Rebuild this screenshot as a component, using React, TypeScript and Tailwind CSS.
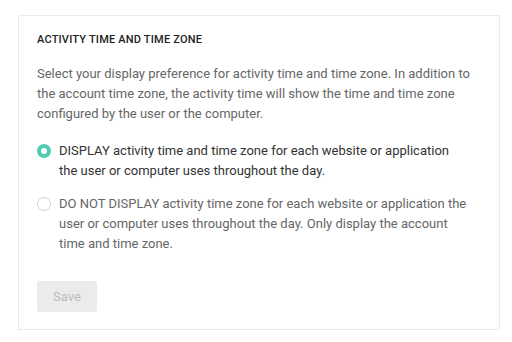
import { useState } from "react";

const options = [
  {
    id: "display",
    label:
      "DISPLAY activity time and time zone for each website or application the user or computer uses throughout the day.",
  },
  {
    id: "hide",
    label:
      "DO NOT DISPLAY activity time zone for each website or application the user or computer uses throughout the day. Only display the account time and time zone.",
  },
];

export default function App() {
  const [selected, setSelected] = useState("display");

  return (
    <div className="min-h-[342px] bg-white pl-[18px] pt-[15px] font-['Roboto',sans-serif]">
      <div className="w-[482px] border border-[#ebebeb] bg-white px-[18px] pt-[16px] pb-[17px]">
        <h2 className="text-[11px] leading-4 font-medium tracking-[0.2px] text-[#222]">
          ACTIVITY TIME AND TIME ZONE
        </h2>

        <p className="mt-4 text-[13px] leading-5 text-[#666]">
          Select your display preference for activity time and time zone. In addition to
          the account time zone, the activity time will show the time and time zone
          configured by the user or the computer.
        </p>

        <div className="mt-[17px] flex flex-col gap-[13px]">
          {options.map((opt) => {
            const active = selected === opt.id;
            return (
              <label
                key={opt.id}
                className="flex cursor-pointer items-start gap-[8px]"
                onClick={() => setSelected(opt.id)}
              >
                <span
                  className={
                    active
                      ? "mt-[3px] flex h-[14px] w-[14px] shrink-0 items-center justify-center rounded-full bg-[#4fcdb4]"
                      : "mt-[3px] h-[14px] w-[14px] shrink-0 rounded-full border border-[#d0d0d0] bg-white"
                  }
                >
                  {active && <span className="h-[6px] w-[6px] rounded-full bg-white" />}
                </span>
                <span
                  className={
                    active
                      ? "pr-3 text-[13px] leading-5 text-[#333]"
                      : "pr-3 text-[13px] leading-5 text-[#666]"
                  }
                >
                  {opt.label}
                </span>
              </label>
            );
          })}
        </div>

        <button
          disabled
          className="mt-[27px] h-[31px] w-[60px] rounded-[3px] bg-[#ebebeb] text-[13px] text-[#bdbdbd]"
        >
          Save
        </button>
      </div>
    </div>
  );
}
